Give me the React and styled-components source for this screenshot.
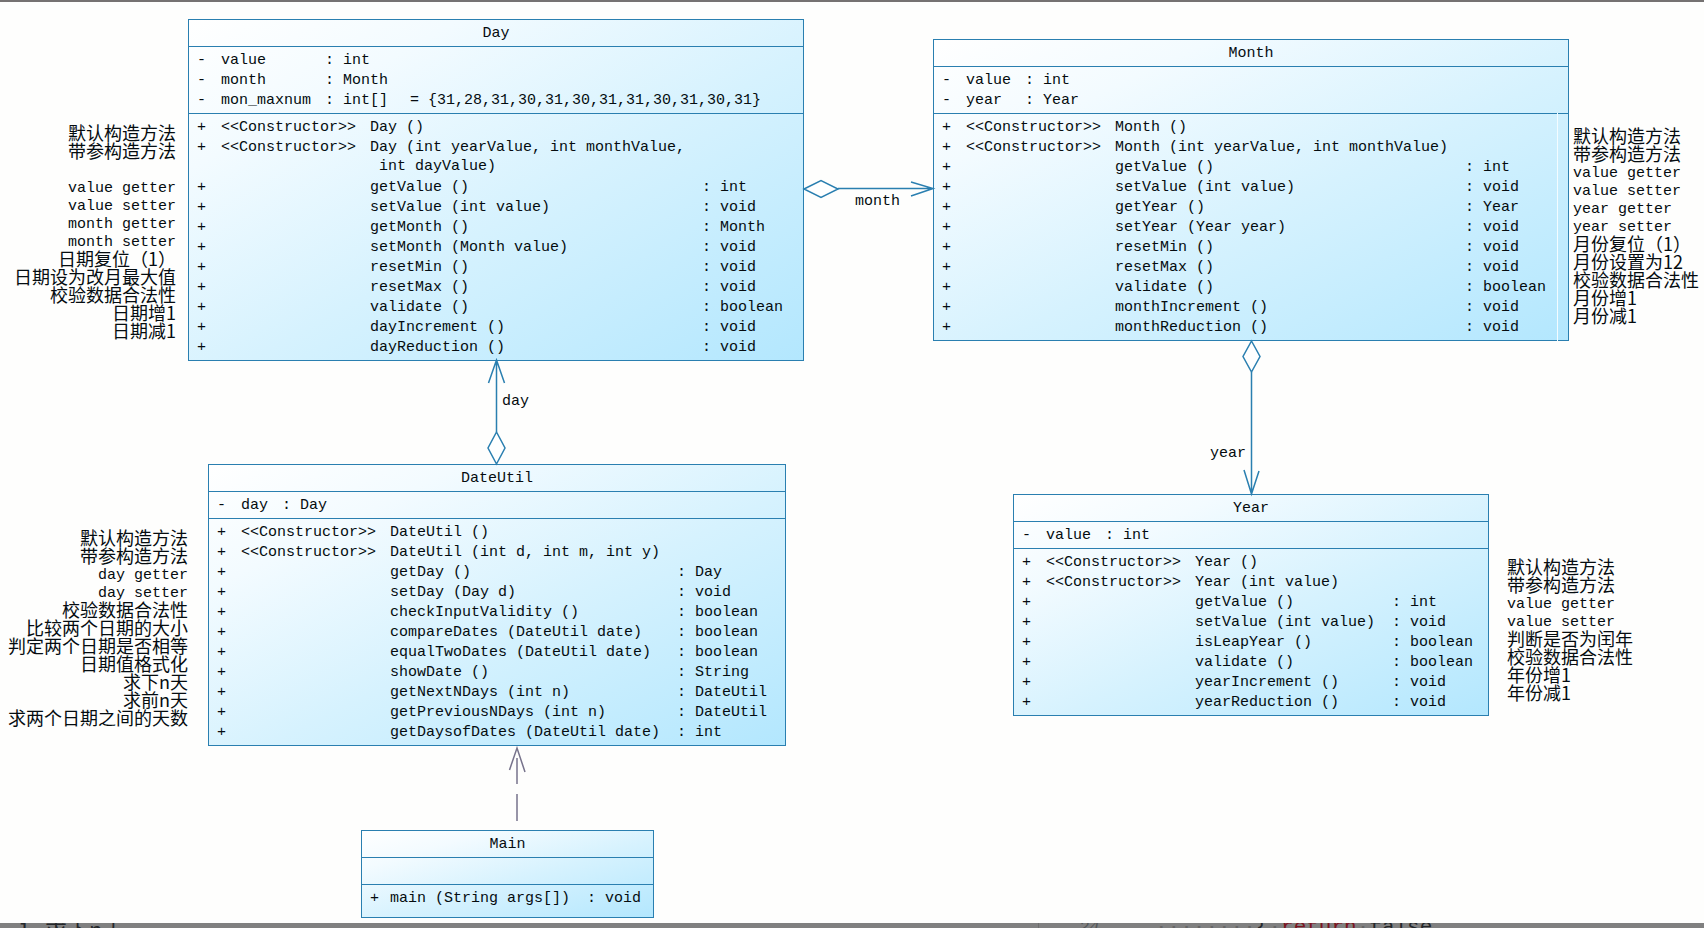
import React from 'react';
import styled, { createGlobalStyle } from 'styled-components';

const GlobalStyle = createGlobalStyle`
  * {
    box-sizing: border-box;
  }

  body {
    margin: 0;
    background: #fefefd;
    color: #050c10;
    font-family: 'Liberation Mono', 'Noto Sans CJK SC', monospace;
    font-size: 15px;
  }
`;

const Page = styled.div`
  display: flex;
  flex-direction: column;
  min-height: 100vh;
  overflow: hidden;
`;

const TopEdge = styled.div`
  height: 2px;
  background: #757272;
`;

const Canvas = styled.main`
  position: relative;
  flex: 1;
  min-height: 920px;
`;

const ClassBox = styled.section`
  position: absolute;
  left: ${props => props.$x}px;
  top: ${props => props.$y}px;
  width: ${props => props.$width}px;
  min-height: 88px;
  display: flex;
  flex-direction: column;
  border: 1px solid #2a7fb0;
  background: linear-gradient(to bottom right, #ffffff 0%, #f3fbff 22%, #d6f2fe 55%, #b3e7fe 100%);
`;

const ClassName = styled.h2`
  margin: 0;
  padding-top: 2px;
  font-size: 15px;
  line-height: 24px;
  font-weight: 400;
  text-align: center;
`;

const Attributes = styled.div`
  min-height: 27px;
  padding: 4px 8px 2px;
  border-top: 1px solid #2a7fb0;
`;

const Methods = styled.div`
  position: relative;
  flex: 1;
  padding: 4px 8px 2px;
  border-top: 1px solid #2a7fb0;
`;

const Seam = styled.span`
  position: absolute;
  top: -1px;
  right: 10px;
  bottom: -1px;
  width: 1px;
  background: #f4fcff;
`;

const Members = styled.table`
  border-collapse: collapse;
  line-height: 20px;
  white-space: pre;
`;

const Cell = styled.td`
  padding: 0 ${props => props.$gap || 0}px 0 0;
  vertical-align: top;
`;

const Continued = styled.span`
  display: block;
  padding: 0 0 2px 9px;
  line-height: 18px;
`;

const Notes = styled.ul`
  position: absolute;
  left: ${props => props.$x}px;
  top: ${props => props.$y}px;
  width: ${props => props.$width}px;
  margin: 0;
  padding: 0;
  list-style: none;
  text-align: ${props => props.$align || 'left'};
  white-space: nowrap;
`;

const Note = styled.li`
  height: 18px;
  line-height: ${props => props.$chinese ? '18px' : '24px'};
  font-family: ${props => props.$chinese
    ? "'Noto Sans CJK SC', sans-serif"
    : "'Liberation Mono', monospace"};
  font-size: ${props => props.$chinese ? '18px' : '15px'};
`;

const Connectors = styled.svg`
  position: absolute;
  left: 0;
  top: 0;
  width: 100%;
  height: 100%;
  fill: none;
  stroke: #2a7fb0;
  stroke-width: 1.5;
  overflow: visible;
`;

const RoleName = styled.span`
  position: absolute;
  left: ${props => props.$x}px;
  top: ${props => props.$y}px;
  line-height: 20px;
`;

const CodeStrip = styled.footer`
  display: grid;
  grid-template-columns: 1038px 1fr;
  grid-template-rows: 5px;
  overflow: hidden;
  background: #808080;
  color: #24272a;
  white-space: pre;
`;

const CodePane = styled.div`
  display: flex;
  align-items: center;
  height: 5px;
  padding-top: 4px;
  padding-left: ${props => props.$indent}px;
  border-left: ${props => props.$ruled ? '1px solid #6e6e6e' : 'none'};
  font-family: ${props => props.$ruled
    ? "'Liberation Mono', monospace"
    : "'Noto Sans CJK SC', sans-serif"};
  font-size: ${props => props.$ruled ? '21px' : '22px'};
  line-height: 24px;
`;

const LineNumber = styled.span`
  width: 76px;
  color: #55585a;
  font-size: 17px;
  font-style: italic;
`;

const Keyword = styled.span`
  color: #7c1420;
`;

const Dots = styled.span`
  color: #666666;
`;

const CTOR = '<<Constructor>>';

const classes = [
  {
    name: 'Day',
    x: 188, y: 17, width: 616,
    attributes: [
      ['value', 'int'],
      ['month', 'Month'],
      ['mon_maxnum', 'int[]', '{31,28,31,30,31,30,31,31,30,31,30,31}']
    ],
    methods: [
      [CTOR, 'Day ()'],
      [CTOR, 'Day (int yearValue, int monthValue,', '', 'int dayValue)'],
      ['', 'getValue ()', 'int'],
      ['', 'setValue (int value)', 'void'],
      ['', 'getMonth ()', 'Month'],
      ['', 'setMonth (Month value)', 'void'],
      ['', 'resetMin ()', 'void'],
      ['', 'resetMax ()', 'void'],
      ['', 'validate ()', 'boolean'],
      ['', 'dayIncrement ()', 'void'],
      ['', 'dayReduction ()', 'void']
    ]
  },
  {
    name: 'Month',
    x: 933, y: 37, width: 636, seam: true,
    attributes: [
      ['value', 'int'],
      ['year', 'Year']
    ],
    methods: [
      [CTOR, 'Month ()'],
      [CTOR, 'Month (int yearValue, int monthValue)'],
      ['', 'getValue ()', 'int'],
      ['', 'setValue (int value)', 'void'],
      ['', 'getYear ()', 'Year'],
      ['', 'setYear (Year year)', 'void'],
      ['', 'resetMin ()', 'void'],
      ['', 'resetMax ()', 'void'],
      ['', 'validate ()', 'boolean'],
      ['', 'monthIncrement ()', 'void'],
      ['', 'monthReduction ()', 'void']
    ]
  },
  {
    name: 'DateUtil',
    x: 208, y: 462, width: 578,
    attributes: [['day', 'Day']],
    methods: [
      [CTOR, 'DateUtil ()'],
      [CTOR, 'DateUtil (int d, int m, int y)'],
      ['', 'getDay ()', 'Day'],
      ['', 'setDay (Day d)', 'void'],
      ['', 'checkInputValidity ()', 'boolean'],
      ['', 'compareDates (DateUtil date)', 'boolean'],
      ['', 'equalTwoDates (DateUtil date)', 'boolean'],
      ['', 'showDate ()', 'String'],
      ['', 'getNextNDays (int n)', 'DateUtil'],
      ['', 'getPreviousNDays (int n)', 'DateUtil'],
      ['', 'getDaysofDates (DateUtil date)', 'int']
    ]
  },
  {
    name: 'Year',
    x: 1013, y: 492, width: 476,
    attributes: [['value', 'int']],
    methods: [
      [CTOR, 'Year ()'],
      [CTOR, 'Year (int value)'],
      ['', 'getValue ()', 'int'],
      ['', 'setValue (int value)', 'void'],
      ['', 'isLeapYear ()', 'boolean'],
      ['', 'validate ()', 'boolean'],
      ['', 'yearIncrement ()', 'void'],
      ['', 'yearReduction ()', 'void']
    ]
  },
  {
    name: 'Main',
    x: 361, y: 828, width: 293,
    attributes: [],
    methods: [['', 'main (String args[])', 'void']]
  }
];

const notes = [
  {
    x: 0, y: 121, width: 176, align: 'right',
    lines: [
      '默认构造方法', '带参构造方法', '', 'value getter', 'value setter',
      'month getter', 'month setter', '日期复位（1）', '日期设为改月最大值',
      '校验数据合法性', '日期增1', '日期减1'
    ]
  },
  {
    x: 1573, y: 124, width: 131,
    lines: [
      '默认构造方法', '带参构造方法', 'value getter', 'value setter',
      'year getter', 'year setter', '月份复位（1）', '月份设置为12',
      '校验数据合法性', '月份增1', '月份减1'
    ]
  },
  {
    x: 0, y: 526, width: 188, align: 'right',
    lines: [
      '默认构造方法', '带参构造方法', 'day getter', 'day setter',
      '校验数据合法性', '比较两个日期的大小', '判定两个日期是否相等',
      '日期值格式化', '求下n天', '求前n天', '求两个日期之间的天数'
    ]
  },
  {
    x: 1507, y: 555, width: 180,
    lines: [
      '默认构造方法', '带参构造方法', 'value getter', 'value setter',
      '判断是否为闰年', '校验数据合法性', '年份增1', '年份减1'
    ]
  }
];

const isChinese = (text) => /[\u4e00-\u9fff]/.test(text);

const UmlClass = ({ data }) => {
  const hasStereotype = data.methods.some(([stereotype]) => stereotype);

  return (
    <ClassBox $x={data.x} $y={data.y} $width={data.width}>
      <ClassName>{data.name}</ClassName>
      <Attributes>
        {data.attributes.length > 0 && (
          <Members>
            <tbody>
              {data.attributes.map(([name, type, initial]) => (
                <tr key={name}>
                  <Cell $gap={15}>-</Cell>
                  <Cell $gap={14}>{name}</Cell>
                  <Cell $gap={22}>{`: ${type}`}</Cell>
                  {initial && <Cell>{`= ${initial}`}</Cell>}
                </tr>
              ))}
            </tbody>
          </Members>
        )}
      </Attributes>
      <Methods>
        <Members>
          <tbody>
            {data.methods.map(([stereotype, signature, type, rest]) => (
              <tr key={signature}>
                <Cell $gap={hasStereotype ? 15 : 11}>+</Cell>
                {hasStereotype && <Cell $gap={14}>{stereotype}</Cell>}
                <Cell $gap={17}>
                  {signature}
                  {rest && <Continued>{rest}</Continued>}
                </Cell>
                <Cell>{type && `: ${type}`}</Cell>
              </tr>
            ))}
          </tbody>
        </Members>
        {data.seam && <Seam />}
      </Methods>
    </ClassBox>
  );
};

const App = () => (
  <>
    <GlobalStyle />
    <Page>
      <TopEdge />
      <Canvas>
        {classes.map(item => <UmlClass key={item.name} data={item} />)}

        {notes.map(({ x, y, width, align, lines }) => (
          <Notes key={`${x}-${y}`} $x={x} $y={y} $width={width} $align={align}>
            {lines.map((line, i) => (
              <Note key={i} $chinese={isChinese(line)}>{line}</Note>
            ))}
          </Notes>
        ))}

        <Connectors aria-hidden="true">
          {/* Day -> Month */}
          <path d="M804 187 L821 178.500 L838 187 L821 195.500 Z" fill="#fff" />
          <path d="M838 186.500 H933 M911 180 L933 186.500 L911 194" />
          {/* DateUtil -> Day */}
          <path d="M496.500 430 L505 446 L496.500 462 L488 446 Z" fill="#fff" />
          <path d="M496.500 430 V358 M488.500 381 L496.500 358 L504.500 381" />
          {/* Month -> Year */}
          <path d="M1251.500 339 L1260 354.500 L1251.500 370 L1243 354.500 Z" fill="#fff" />
          <path d="M1251.500 370 V492 M1244 468 L1251.500 492 L1259 469" />
          {/* Main -> DateUtil */}
          <path d="M517 819 V792 M517 782 V756 M509.500 768 L517 746 L525 770" stroke="#77738c" />
        </Connectors>

        <RoleName $x={855} $y={190}>month</RoleName>
        <RoleName $x={502} $y={390}>day</RoleName>
        <RoleName $x={1210} $y={442}>year</RoleName>
      </Canvas>
      <CodeStrip>
        <CodePane $indent={18}>1   求下n天</CodePane>
        <CodePane $indent={40} $ruled>
          <LineNumber>24</LineNumber>
          <Dots>········</Dots>
          {'{'}
          <Dots>·</Dots>
          <Keyword>return</Keyword>
          <Dots>·</Dots>
          false
        </CodePane>
      </CodeStrip>
    </Page>
  </>
);

export default App;
